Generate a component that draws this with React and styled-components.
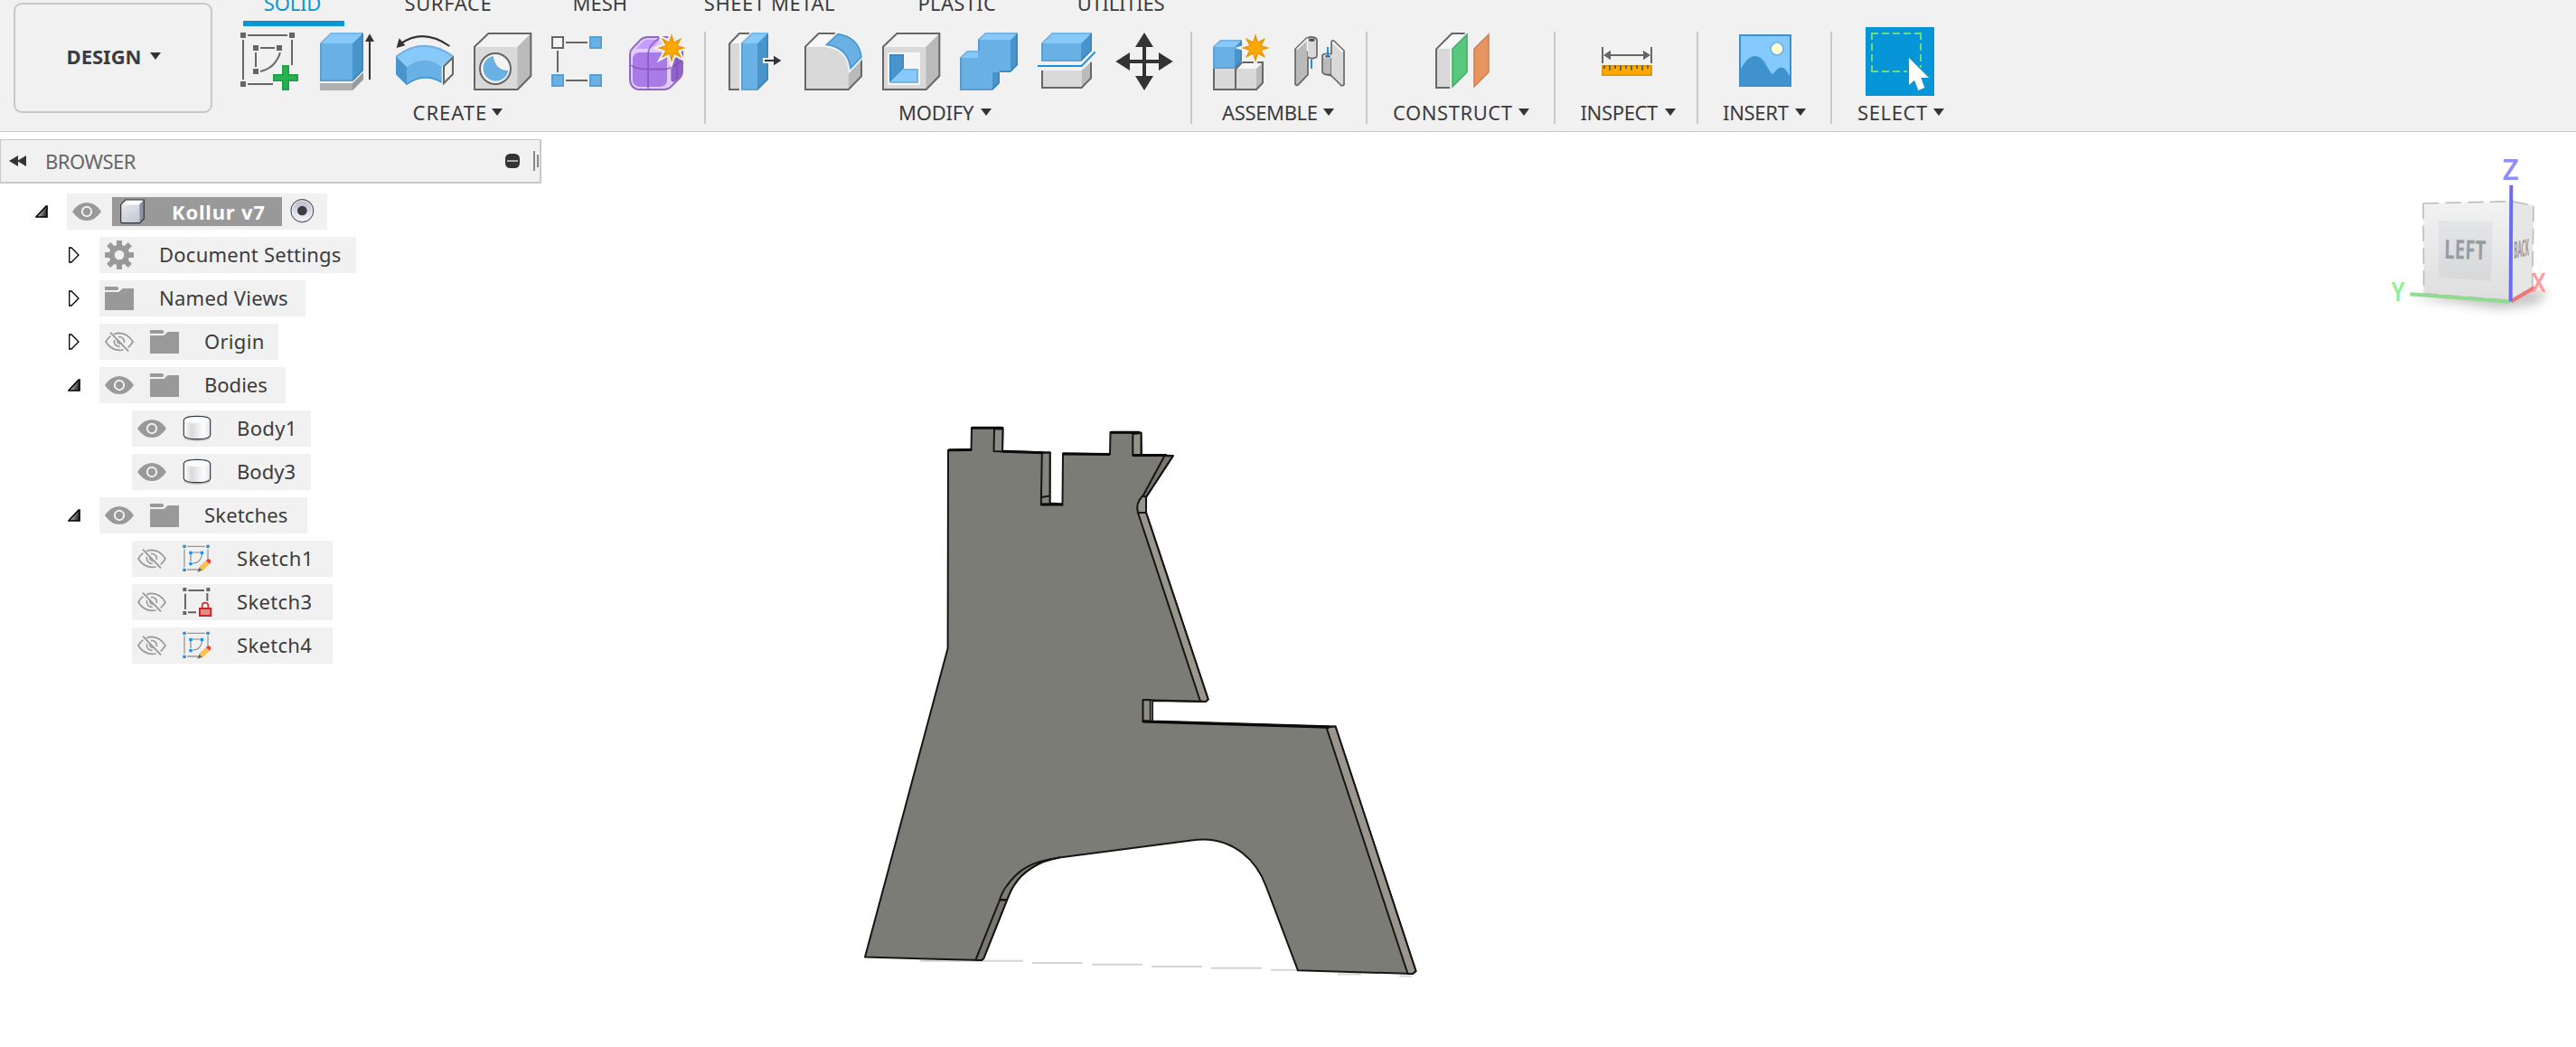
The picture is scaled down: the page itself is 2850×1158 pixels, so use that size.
import React from "react";
import styled, { createGlobalStyle, css } from "styled-components";

const INK = "#3c3c3c";
const LINE = "#c8c8c8";
const PANEL = "#f1f1f1";
const ACCENT = "#0696d7";

const GlobalStyle = createGlobalStyle`
  * { box-sizing: border-box; }
  body { margin: 0; background: #fff; }
`;

const Page = styled.div`
  width: 2850px;
  height: 1158px;
  overflow: hidden;
  display: flex;
  flex-direction: column;
  background: #fff;
  color: ${INK};
  font-family: "Noto Sans", "Open Sans", sans-serif;
  font-size: 22px;
  svg { display: block; flex: none; overflow: visible; }
`;

/* ---------- toolbar ---------- */

const Toolbar = styled.header`
  height: 146px;
  flex: none;
  display: flex;
  background: ${PANEL};
  border-bottom: 1px solid ${LINE};
  overflow: hidden;
`;

const WorkspaceButton = styled.button`
  width: 220px;
  height: 122px;
  margin: 3px 12px 0 15px;
  padding: 0 0 4px 2px;
  flex: none;
  display: flex;
  align-items: center;
  justify-content: center;
  gap: 10px;
  background: transparent;
  border: 2px solid ${LINE};
  border-radius: 9px;
  color: ${INK};
  font: inherit;
  font-weight: 700;
`;

const Ribbon = styled.div`
  display: flex;
  flex-direction: column;
`;

const Tabs = styled.nav`
  display: flex;
  height: 41px;
  margin-top: -12px;
  padding-left: 22px;
  flex: none;
`;

const Tab = styled.div`
  width: ${(p) => p.$width}px;
  margin-right: ${(p) => p.$after}px;
  padding-bottom: 5px;
  flex: none;
  text-align: center;
  line-height: 30px;
  white-space: nowrap;
  letter-spacing: ${(p) => p.$spacing}px;
  border-bottom: 6px solid transparent;
  ${(p) => p.$active && css`
    padding-right: 3px;
    color: ${ACCENT};
    border-bottom-color: ${ACCENT};
  `}
`;

const Groups = styled.div`
  display: flex;
`;

const Group = styled.section`
  width: ${(p) => p.$width}px;
  flex: none;
  display: flex;
  flex-direction: column;
  padding-top: 1px;
`;

const Divider = styled.div`
  width: 2px;
  height: 102px;
  margin-top: 6px;
  flex: none;
  background: ${LINE};
`;

const IconRow = styled.div`
  display: flex;
  height: 76px;
  padding-left: ${(p) => p.$inset}px;
`;

const GroupLabel = styled.div`
  display: flex;
  align-items: center;
  gap: 7px;
  height: 30px;
  margin-top: 3px;
  padding-left: ${(p) => p.$inset}px;
  line-height: 30px;
  white-space: nowrap;
`;

const Caption = styled.span`
  width: ${(p) => (p.$width ? p.$width + "px" : "auto")};
  letter-spacing: ${(p) => p.$spacing || 0}px;
`;

const Caret = ({ w = 12 }) => (
  <svg width={w} height="8" viewBox="0 0 12 8">
    <path d="M0 0H12L6 8Z" fill="#333" />
  </svg>
);

const Tool = ({ x, children }) => (
  <svg width="86" height="76" viewBox={`${x} 90 258 228`}>{children}</svg>
);

const star = (x, y, outer, inner) =>
  Array.from({ length: 16 }, (_, i) => {
    const r = i % 2 ? inner : outer;
    const a = (i * Math.PI) / 8;
    return `${(x + r * Math.sin(a)).toFixed(1)},${(y - r * Math.cos(a)).toFixed(1)}`;
  }).join(" ");

const Burst = ({ x, y }) => (
  <g>
    <polygon points={star(x, y, 48, 22)} fill={PANEL} stroke={PANEL} strokeWidth="12" />
    <polygon points={star(x, y, 48, 22)} fill="#e69800" />
    <polygon points={star(x, y, 32, 16)} fill="#ffa900" />
  </g>
);

const G = { stroke: "#666", strokeWidth: 6, fill: "none" };

const SketchIcon = () => (
  <Tool x={765}>
    <path d="M822 117H954M822 279H906M807 132V264M969 132V216M864 159H912M849 174V222M864 237Q914 226 930 174" {...G} />
    <path d="M798 108h18v18h-18zM960 108h18v18h-18zM798 270h18v18h-18zM840 150h18v18h-18zM918 150h18v18h-18zM840 228h18v18h-18z" fill="#666" />
    <path d="M939 219h18v30h30v18h-30v30h-18v-30h-30v-18h30z" fill="#26b450" stroke="#21a049" strokeWidth="6" />
  </Tool>
);

const ExtrudeIcon = () => (
  <Tool x={1023}>
    <path d="M1062 276H1170V300H1062Z" fill="#b0b0b0" />
    <path d="M1170 276L1206 240V264L1170 300Z" fill="#999" />
    <path d="M1062 144H1170V270H1062Z" fill="#69b0e5" />
    <path d="M1062 144L1098 108H1206L1170 144Z" fill="#87c9fb" />
    <path d="M1170 144L1206 108V234L1170 270Z" fill="#4894cd" />
    <path d="M1065 144V267H1169" stroke="#5c9fd2" strokeWidth="6" fill="none" />
    <path d="M1064 144L1099 111H1204" stroke="#76b3e2" strokeWidth="5" fill="none" />
    <path d="M1203 112V233L1170 267" stroke="#3d85bb" strokeWidth="5" fill="none" />
    <path d="M1227 264V130" stroke="#333" strokeWidth="6" />
    <path d="M1227 112L1242 138H1212Z" fill="#333" />
  </Tool>
);

const RevolveIcon = () => (
  <Tool x={1281}>
    <path d="M1314 186Q1405 114 1504 186L1466 220Q1407 176 1350 222Z" fill="#87c9fb" />
    <path d="M1316 187Q1405 118 1501 185" stroke="#70b0e0" strokeWidth="6" fill="none" />
    <path d="M1314 186L1350 222V282L1314 246Z" fill="#4894cd" />
    <path d="M1350 222Q1407 176 1466 220V276Q1407 240 1350 282Z" fill="#69b0e5" />
    <path d="M1316 246L1350 279Q1407 238 1465 272" stroke="#4b97d0" strokeWidth="5" fill="none" />
    <path d="M1473 220L1503 191V246L1473 276Z" fill={PANEL} stroke="#666" strokeWidth="6" />
    <path d="M1492 153Q1405 92 1330 145" stroke="#333" strokeWidth="6" fill="none" />
    <path d="M1316 159L1325 127L1345 151Z" fill="#333" />
  </Tool>
);

const Block = ({ x = 75, top = 156 }) => (
  <g>
    <path d={`M${x} ${top}L${x + 46} 111H${x + 187}L${x + 142} ${top}Z`} fill="#f3f3f3" />
    <path d={`M${x} ${top}H${x + 142}V297H${x}Z`} fill="#d9d9d9" />
    <path d={`M${x + 142} ${top}L${x + 187} 111V252L${x + 142} 297Z`} fill="#bababa" />
    <path d={`M${x} ${top - 1}L${x + 46} 111H${x + 187}V252L${x + 143} 297H${x}Z`} {...G} />
  </g>
);

const HoleIcon = () => (
  <Tool x={39}>
    <Block />
    <circle cx="144" cy="228" r="51" fill="#f3f3f3" stroke="#666" strokeWidth="6" />
    <path d="M137 186A42 42 0 1 0 187 234Q145 234 137 186Z" fill="#69b0e5" />
  </Tool>
);

const PatternIcon = () => (
  <Tool x={297}>
    <path d="M378 141H450M378 267H450M351 168V240" {...G} />
    <rect x="333" y="123" width="36" height="36" fill="#f5f5f5" stroke="#666" strokeWidth="6" />
    {[[459, 123], [333, 249], [459, 249]].map(([x, y]) => (
      <rect key={`${x}-${y}`} x={x} y={y} width="36" height="36" fill="#69b0e5" stroke="#5a9fd2" strokeWidth="6" />
    ))}
  </Tool>
);

const FormIcon = () => (
  <Tool x={555}>
    <path d="M591 180Q591 168 599 160L626 132Q636 123 650 123H735Q765 123 765 150V238Q765 250 757 258L728 287Q718 297 705 297H628Q591 297 591 260Z" fill="#e0cbfa" />
    <path d="M610 162L633 139Q640 131 652 131H690L668 160Q650 163 610 162Z" fill="#c79bff" />
    <rect x="600" y="174" width="114" height="114" rx="22" fill="#a97be6" />
    <path d="M727 220Q727 205 735 198L757 180Q766 180 766 200V238Q766 245 760 252L740 271Q727 275 727 262Z" fill="#9162cb" />
    <path d="M595 216Q610 230 650 230H700Q730 231 764 200M651 294V180Q651 150 690 125M747 180V268" stroke="#7d4cb0" strokeOpacity=".75" strokeWidth="5" fill="none" />
    <path d="M591 180Q591 168 599 160L626 132Q636 123 650 123H735Q765 123 765 150V238Q765 250 757 258L728 287Q718 297 705 297H628Q591 297 591 260Z" fill="none" stroke="#8f66c0" strokeWidth="6" />
    <path d="M695 100H790V190L762 196L716 205L690 180Z" fill="none" />
    <path d="M700 117H780V190L768 192V170L745 128Z" fill={PANEL} />
    <Burst x={729} y={159} />
  </Tool>
);

const PressPullIcon = () => (
  <Tool x={39}>
    <path d="M81 144L114 111H148L114 144Z" fill="#f7f7f7" />
    <path d="M81 144H114V297H81Z" fill="#d9d9d9" />
    <path d="M148 111H114L81 145V297H114" {...G} />
    <path d="M114 144L154 105V300H114Z" fill={PANEL} />
    <path d="M120 144H174V300H120Z" fill="#69b0e5" />
    <path d="M120 144L156 108H210L174 144Z" fill="#87c9fb" />
    <path d="M174 144L210 108V264L174 300Z" fill="#4894cd" />
    <path d="M123 144V297H174" stroke="#5a9fd2" strokeWidth="5" fill="none" />
    <path d="M122 144L157 111H206" stroke="#76b3e2" strokeWidth="5" fill="none" />
    <path d="M207 113V263L174 296" stroke="#3d85bb" strokeWidth="5" fill="none" />
    <path d="M192 192H222V180L258 201L222 222V210H192Z" fill={PANEL} />
    <path d="M198 201H230" stroke="#333" strokeWidth="6" />
    <path d="M228 185L253 201L228 217Z" fill="#333" />
  </Tool>
);

const FilletIcon = () => (
  <Tool x={297}>
    <path d="M333 155L377 111H434L400 154Z" fill="#f7f7f7" />
    <path d="M333 156H395Q476 160 476 245V297H333Z" fill="#d9d9d9" />
    <path d="M476 240L519 200V252L476 297Z" fill="#bababa" />
    <path d="M432 111H377L333 155V297H476L519 253V198" {...G} />
    <path d="M400 151L440 111Q512 120 521 190L482 230Q476 160 400 151Z" fill="#69b0e5" stroke="#f3f3f3" strokeWidth="12" />
    <path d="M404 148L441 113Q510 124 519 189L483 226Q474 158 404 148Z" fill="#69b0e5" stroke="#4b97d0" strokeWidth="5" />
  </Tool>
);

const ShellIcon = () => (
  <Tool x={555}>
    <Block x={591} />
    <path d="M606 174H714V282H606Z" fill="#f5f5f5" />
    <path d="M612 180H660V228L612 276Z" fill="#4894cd" />
    <path d="M660 228H708V276H612Z" fill="#87c9fb" />
    <path d="M615 268V183H657V226" stroke="#3d85bb" strokeWidth="5" fill="none" />
    <path d="M660 231H705V273H618" stroke="#70b0e0" strokeWidth="5" fill="none" />
  </Tool>
);

const CombineIcon = () => (
  <Tool x={813}>
    <path d="M846 192H906V132H1014V240H954V300H846Z" fill="#69b0e5" />
    <path d="M846 192L870 168H906V192ZM906 132L930 108H1038L1014 132Z" fill="#87c9fb" />
    <path d="M1014 132L1038 108V216L1014 240ZM954 240H978V276L954 300Z" fill="#4894cd" />
    <path d="M849 192V297H953M909 132V168M978 237H1014" stroke="#5195cb" strokeWidth="5" fill="none" />
    <path d="M848 192L871 171H906M908 132L931 111H1034" stroke="#70b0e0" strokeWidth="5" fill="none" />
    <path d="M1035 112V215L1013 237H978M975 240V275L954 296" stroke="#3d85bb" strokeWidth="5" fill="none" />
  </Tool>
);

const SplitIcon = () => (
  <Tool x={1071}>
    <path d="M1119 234H1250V291H1119Z" fill="#d9d9d9" />
    <path d="M1250 234L1281 206V258L1250 291Z" fill="#bababa" />
    <path d="M1119 234V291H1250L1281 259V206" {...G} />
    <path d="M1116 144H1248V204H1116Z" fill="#69b0e5" />
    <path d="M1116 144L1152 108H1284L1248 144Z" fill="#87c9fb" />
    <path d="M1248 144L1284 108V168L1248 204Z" fill="#4894cd" />
    <path d="M1119 144V201H1247" stroke="#5a9fd2" strokeWidth="5" fill="none" />
    <path d="M1118 144L1153 111H1280" stroke="#70b0e0" strokeWidth="5" fill="none" />
    <path d="M1281 112V167L1248 200" stroke="#3d85bb" strokeWidth="5" fill="none" />
    <path d="M1104 219H1250L1295 172" stroke="#1a8fe8" strokeWidth="6" fill="none" />
  </Tool>
);

const MoveIcon = () => (
  <Tool x={1329}>
    <path d="M1458 108L1488 156H1464V198H1506V174L1553 204L1506 234V210H1464V252H1488L1458 300L1428 252H1452V210H1410V234L1363 204L1410 174V198H1452V156H1428Z" fill="#333" />
  </Tool>
);

const ComponentIcon = () => (
  <Tool x={147}>
    <path d="M189 228H261V297H189Z" fill="#d9d9d9" />
    <path d="M261 228L282 207H351L330 228Z" fill="#f7f7f7" />
    <path d="M261 228H330V297H261Z" fill="#d9d9d9" />
    <path d="M330 228L351 207V275L330 297Z" fill="#bababa" />
    <path d="M189 226V297H330L351 275V207H282L261 230V297" {...G} />
    <path d="M186 156H258V228H186Z" fill="#69b0e5" />
    <path d="M186 156L210 132H282L258 156Z" fill="#87c9fb" />
    <path d="M258 156L282 132V204L258 228Z" fill="#4894cd" />
    <path d="M189 156V225H258" stroke="#5a9fd2" strokeWidth="5" fill="none" />
    <path d="M188 156L211 135H279" stroke="#70b0e0" strokeWidth="5" fill="none" />
    <path d="M279 136V203L258 225" stroke="#3d85bb" strokeWidth="5" fill="none" />
    <Burst x={327} y={159} />
  </Tool>
);

const JointIcon = () => (
  <Tool x={405}>
    <path d="M498 132V186Q501 193 516 194Q531 193 531 184V132Q527 123 514 123Q502 124 498 130Z" fill="#d9d9d9" stroke="#666" strokeWidth="5" />
    <path d="M459 163L497 126V170L501 192V248L470 280Q462 287 459 279Z" fill="#bababa" />
    <path d="M501 190V248L470 280Q462 287 459 279V163L497 126Q514 119 531 129" stroke="#666" strokeWidth="5" fill="none" />
    <path d="M464 164L499 130V170" stroke="#f3f3f3" strokeWidth="5" fill="none" />
    <ellipse cx="514" cy="133" rx="10" ry="5" fill="#4d4d4d" />
    <path d="M513 196V228" stroke="#1a8fe8" strokeWidth="6" />
    <path d="M549 184V239Q552 247 565 248H579V180Q573 178 566 178Q553 178 549 184Z" fill="#bababa" stroke="#666" strokeWidth="5" />
    <ellipse cx="567" cy="187" rx="14" ry="7" fill="#e6e6e6" />
    <ellipse cx="567" cy="187" rx="9" ry="4" fill="#4d4d4d" />
    <path d="M567 156V190" stroke="#1a8fe8" strokeWidth="6" />
    <path d="M579 138Q583 133 588 136L621 168V281Q616 287 610 282L579 251Z" fill="#d9d9d9" />
    <path d="M579 180V138Q583 133 588 136L621 168V281Q616 287 610 282L579 251L566 248" stroke="#666" strokeWidth="5" fill="none" />
    <path d="M583 139L617 172" stroke="#f5f5f5" strokeWidth="6" />
  </Tool>
);

const PlaneIcon = () => (
  <Tool x={879}>
    <path d="M927 162L979 111H1025L976 162Z" fill="#f7f7f7" />
    <path d="M927 162H973V291H927Z" fill="#d9d9d9" />
    <path d="M1022 111H979L927 163V291H972" {...G} />
    <path d="M981 162L1029 115V239L981 287Z" fill="#58c87f" stroke="#4aae6d" strokeWidth="5" />
    <path d="M1053 162L1101 115V239L1053 287Z" fill="#e69560" stroke="#cc8458" strokeWidth="5" />
  </Tool>
);

const MeasureIcon = () => (
  <Tool x={48}>
    <path d="M99 156V210M261 156V210M118 183H242" {...G} />
    <path d="M102 183L126 167V199ZM258 183L234 167V199Z" fill="#666" />
    <rect x="99" y="219" width="162" height="30" fill="#ffa900" stroke="#e69800" strokeWidth="6" />
    <path d="M105 216V228M123 216V234M141 216V228M159 216V234M177 216V228M195 216V234M213 216V228M231 216V234M249 216V228" {...G} />
  </Tool>
);

const InsertIcon = () => (
  <Tool x={510}>
    <rect x="555" y="117" width="168" height="168" fill="#84caff" />
    <circle cx="678" cy="162" r="21" fill="#ffffd0" stroke="#6fb4e8" strokeWidth="5" />
    <path d="M555 234Q580 186 604 186Q626 186 640 212Q655 240 664 247Q682 222 694 224Q708 225 721 255V285H555Z" fill="#3f93cd" />
    <rect x="555" y="117" width="168" height="168" fill="none" stroke="#3f8fc9" strokeWidth="6" />
  </Tool>
);

const SelectIcon = () => (
  <Tool x={957}>
    <rect x="972" y="90" width="228" height="228" fill={ACCENT} />
    <path d="M993 132V111H1014M1026 111H1050M1062 111H1086M1098 111H1122M1134 111H1155V132M1155 144V168M1155 180V204M993 144V168M993 180V204M993 216V237H1014M1026 237H1050M1062 237H1086M1098 237H1110M1155 216V224" stroke="#6bdc85" strokeWidth="6" fill="none" />
    <path d="M1116 192L1182 258H1156L1168 291L1147 300L1134 266L1116 282Z" fill="#fff" />
  </Tool>
);

const groups = [
  { name: "CREATE", width: 532, inset: 8, label: 209.5, text: 80.5, spacing: 1, icons: [SketchIcon, ExtrudeIcon, RevolveIcon, HoleIcon, PatternIcon, FormIcon] },
  { name: "MODIFY", width: 536, inset: 12, label: 213, text: 84, spacing: -0.2, icons: [PressPullIcon, FilletIcon, ShellIcon, CombineIcon, SplitIcon, MoveIcon] },
  { name: "ASSEMBLE", width: 192, inset: 10, label: 33, text: 105, spacing: -0.35, icons: [ComponentIcon, JointIcon] },
  { name: "CONSTRUCT", width: 206, inset: 60, label: 28, text: 132, spacing: 0.55, icons: [PlaneIcon] },
  { name: "INSPECT", width: 156, inset: 35, label: 27.5, text: 86.5, spacing: -0.35, icons: [MeasureIcon] },
  { name: "INSERT", width: 146, inset: 31, label: 27, text: 73, spacing: -0.3, icons: [InsertIcon] },
  { name: "SELECT", width: 150, inset: 32, label: 28, text: 76.5, spacing: 0.6, icons: [SelectIcon] },
];

const tabs = [
  ["SOLID", 112, 66.5, -0.15, true],
  ["SURFACE", 96, 90, 0.6],
  ["MESH", 60, 85, 0],
  ["SHEET METAL", 146, 91, 0.55],
  ["PLASTIC", 86, 89.5, 0.3],
  ["UTILITIES", 98, 0, -0.25],
];

/* ---------- browser panel ---------- */

const Workspace = styled.main`
  display: flex;
  flex: 1;
  align-items: flex-start;
`;

const Browser = styled.aside`
  width: 600px;
  flex: none;
  padding-top: 8px;
`;

const BrowserHeader = styled.div`
  width: 599px;
  height: 49px;
  display: flex;
  align-items: center;
  padding: 0 1px 0 9px;
  background: ${PANEL};
  border: 1px solid ${LINE};
  border-right-width: 2px;
  border-bottom-width: 2px;
  color: #666;
`;

const BrowserTitle = styled.span`
  flex: 1;
  padding: 0 0 1px 20px;
  letter-spacing: -0.5px;
`;

const Tree = styled.ul`
  list-style: none;
  margin: 11px 0 0;
  padding: 0;
  display: flex;
  flex-direction: column;
  gap: 8px;
`;

const Row = styled.li`
  display: flex;
  align-items: center;
  height: 40px;
  padding-left: ${(p) => 38 + p.$depth * 36}px;
`;

const Toggle = styled.span`
  width: 36px;
  padding-left: ${(p) => (p.$open ? 1 : 2)}px;
  flex: none;
`;

const RowBody = styled.div`
  display: flex;
  align-items: center;
  width: ${(p) => p.$width}px;
  height: 40px;
  padding-left: 6px;
  background: ${PANEL};
  white-space: nowrap;
`;

const Slot = styled.span`
  width: 32px;
  height: 32px;
  margin-right: 18px;
  flex: none;
  display: flex;
  align-items: center;
  justify-content: center;
`;

const RowText = styled.span`
  padding: 0 0 2px 10px;
  line-height: 38px;
  letter-spacing: ${(p) => p.$spacing}px;
`;

const Selected = styled.div`
  display: flex;
  align-items: center;
  width: 188px;
  height: 32px;
  margin: 0 9px 0 -6px;
  padding-left: 9px;
  background: #999;
  color: #fff;
  font-weight: 700;
  line-height: 30px;
  letter-spacing: 0.8px;
`;

const SelectedText = styled.span`
  padding: 0 0 1px 30px;
`;

const OpenArrow = () => (
  <svg width="14" height="14" viewBox="0 0 14 14">
    <defs>
      <linearGradient id="arrow" x1="0" y1="0" x2="1" y2="0.3">
        <stop offset="0.2" stopColor="#ddd" />
        <stop offset="1" stopColor="#333" />
      </linearGradient>
    </defs>
    <path d="M1 12.7L12 1H13V13H1Z" fill="url(#arrow)" stroke="#000" strokeWidth="1.6" />
  </svg>
);

const ClosedArrow = () => (
  <svg width="12" height="18" viewBox="0 0 12 18">
    <path d="M.7 1H3L11 9L3 17H.7Z" fill="#fff" stroke="#000" strokeWidth="1.3" />
  </svg>
);

const Eye = () => (
  <svg width="32" height="20" viewBox="0 0 96 60">
    <path d="M0 30Q20 0 48 0T96 30Q76 60 48 60T0 30Z" fill="#999" />
    <circle cx="48" cy="30" r="15.5" fill="#999" stroke="#f1f1f1" strokeWidth="6" />
  </svg>
);

const EyeOff = () => (
  <svg width="32" height="22" viewBox="0 0 96 66">
    <path d="M30 8Q39 4 48 4Q76 5 93 33Q85 46 77 52M62 59Q56 61 48 61Q20 60 3 33Q10 21 19 14M45 17A16 16 0 0 1 64 36M32 27A17 17 0 0 0 50 49M42 28Q40 38 52 40" fill="none" stroke="#999" strokeWidth="5" />
    <path d="M18 2L78 64" stroke="#999" strokeWidth="5.5" />
  </svg>
);

const Gear = () => (
  <svg width="32" height="32" viewBox="0 0 96 96">
    <g fill="#999">
      <rect x="39" y="0" width="18" height="96" />
      <rect x="0" y="39" width="96" height="18" />
      <rect x="39" y="-2" width="18" height="100" transform="rotate(45 48 48)" />
      <rect x="39" y="-2" width="18" height="100" transform="rotate(-45 48 48)" />
      <circle cx="48" cy="48" r="34" />
    </g>
    <circle cx="48" cy="48" r="16" fill="#f1f1f1" />
  </svg>
);

const Folder = () => (
  <svg width="32" height="26" viewBox="0 0 96 78">
    <path d="M0 0H39Q46 1 46 7L42 12H0ZM0 18H46L59 6H96V78H0Z" fill="#999" />
  </svg>
);

const Cylinder = () => (
  <svg width="32" height="30" viewBox="0 0 96 90">
    <defs>
      <linearGradient id="cyl">
        <stop offset="0" stopColor="#fff" />
        <stop offset="0.3" stopColor="#d8dadd" />
        <stop offset="0.75" stopColor="#fdfdfd" />
        <stop offset="1" stopColor="#e4e4e6" />
      </linearGradient>
    </defs>
    <ellipse cx="48" cy="76" rx="43" ry="10" fill="#bbb" />
    <path d="M4 16Q8 4 48 4T92 16V68Q88 80 48 80T4 68Z" fill="url(#cyl)" stroke="#333943" strokeWidth="3.5" />
    <path d="M7 17Q10 7 48 7T89 17Q82 27 48 27T7 17Z" fill="#fbfbfb" />
  </svg>
);

const SketchItem = () => (
  <svg width="32" height="32" viewBox="0 0 96 96">
    <path d="M15 7H75M6 16V76M15 84H54M84 16V60" stroke="#999" strokeWidth="4" fill="none" />
    <path d="M32 27H58M27 33V58M34 63Q62 62 64 33" stroke="#888" strokeWidth="3.5" fill="none" />
    <path d="M1 2h10v10H1zM79 2h10v10H79zM1 80h10v10H1zM22 23h10v10H22zM59 23h10v10H59zM22 60h10v10H22z" fill="#1a8fe8" />
    <path d="M49 92L56 76L66 86Z" fill="#666" />
    <path d="M56 76L77 55L88 65L67 86Z" fill="#ffc24d" stroke="#f0b03a" strokeWidth="2" />
    <path d="M78 54Q84 46 91 50Q97 57 89 65Z" fill="#f33" />
  </svg>
);

const LockedSketch = () => (
  <svg width="32" height="32" viewBox="0 0 96 96">
    <path d="M19 9H72M9 20V72M82 18V44M18 82H45" stroke="#666" strokeWidth="6" fill="none" />
    <path d="M1 0h12v12H1zM79 0h12v12H79zM1 78h12v12H1z" fill="#666" />
    <path d="M65 68V58Q66 50 75 50T85 58V68" fill="none" stroke="#d03030" strokeWidth="5" />
    <rect x="57" y="69" width="37" height="24" fill="#e08a8a" stroke="#c82828" strokeWidth="6" />
  </svg>
);

const RootCube = () => (
  <svg width="27" height="28" viewBox="0 0 81 84">
    <defs>
      <linearGradient id="cubeFront" x1="0" y1="0" x2="0.6" y2="1">
        <stop offset="0" stopColor="#eceef4" />
        <stop offset="1" stopColor="#c3c8d4" />
      </linearGradient>
    </defs>
    <path d="M2 19L18 3H79V66L65 80H7Q2 80 2 74Z" fill="url(#cubeFront)" />
    <path d="M3 19L18 4H77L64 19Z" fill="#fff" />
    <path d="M64 19L78 4V66L65 79Z" fill="#8a90a0" />
    <path d="M2 19L18 3H79V66L65 80H7Q2 80 2 74Z" fill="none" stroke="#30333b" strokeWidth="3.5" />
  </svg>
);

const Radio = () => (
  <svg width="27" height="28" viewBox="0 0 81 84">
    <defs>
      <linearGradient id="radio" x1="0" y1="0" x2="0" y2="1">
        <stop offset="0" stopColor="#b4b9ca" />
        <stop offset="1" stopColor="#f4f6fb" />
      </linearGradient>
    </defs>
    <circle cx="40" cy="42" r="38" fill="#aaa" opacity=".5" />
    <circle cx="40" cy="39" r="37.5" fill="url(#radio)" stroke="#444" strokeWidth="3" />
    <circle cx="40" cy="39" r="33" fill="none" stroke="#fff" strokeOpacity=".6" strokeWidth="3" />
    <circle cx="40" cy="39" r="16" fill="#3c3c40" />
  </svg>
);

const slots = { eye: Eye, off: EyeOff, gear: Gear, folder: Folder, body: Cylinder, sketch: SketchItem, locked: LockedSketch };

const rows = [
  { text: "Document Settings", depth: 1, width: 284, toggle: "closed", icons: ["gear"], spacing: 0.24 },
  { text: "Named Views", depth: 1, width: 228, toggle: "closed", icons: ["folder"], spacing: 0.25 },
  { text: "Origin", depth: 1, width: 198, toggle: "closed", icons: ["off", "folder"], spacing: 0.3 },
  { text: "Bodies", depth: 1, width: 206, toggle: "open", icons: ["eye", "folder"], spacing: 0 },
  { text: "Body1", depth: 2, width: 198, icons: ["eye", "body"], spacing: 0.35 },
  { text: "Body3", depth: 2, width: 198, icons: ["eye", "body"], spacing: 0.05 },
  { text: "Sketches", depth: 1, width: 230, toggle: "open", icons: ["eye", "folder"], spacing: 0.15 },
  { text: "Sketch1", depth: 2, width: 222, icons: ["off", "sketch"], spacing: 0.6 },
  { text: "Sketch3", depth: 2, width: 222, icons: ["off", "locked"], spacing: 0.35 },
  { text: "Sketch4", depth: 2, width: 222, icons: ["off", "sketch"], spacing: 0.3 },
];

/* ---------- viewport ---------- */

const Viewport = styled.section`
  flex: 1;
  height: 100%;
  display: flex;
  align-items: flex-start;
  justify-content: space-between;
  padding: 14px 0 0 340px;
`;

const ModelFrame = styled.div`
  padding-top: 300px;
`;

const Model = () => (
  <svg width="640" height="640" viewBox="940 460 640 640">
    <g stroke="#d4d4d4" strokeWidth="2">
      <path d="M1018 1062.7H1131.7M1142 1065H1197.7M1208 1066.8H1264M1274 1069H1329.7M1340 1070.8H1396M1406 1072.8H1450M1480 1077.5H1506M1548 1079.5H1562" />
    </g>
    <g stroke="#151515" strokeWidth="2" strokeLinejoin="round">
      <path d="M1049 498L1074.5 497.5L1075 473L1109.5 473L1109 499L1161.7 500.5L1161.5 556.5L1175.5 557.5L1176 501.5L1228 502.3L1228.5 478L1262.5 478.5L1263 503.5L1298 504L1268 550V567L1336.7 773.5L1334 776L1275 775V797.5L1477.5 803.5L1566.5 1074L1563 1077L1436 1073.3L1401 981C1390 950 1364 929 1332 928.5Q1326 928.4 1318 929.5L1172 948.5C1148 952 1130 966 1122 979Q1118 985 1114.3 995L1088.3 1060L1086 1062L957 1058.6L1048.6 717Z" fill="#7b7c75" />
      <path d="M1100 474.5H1109.5L1109 499.5L1099.5 499Z" fill="#8d8b84" />
      <path d="M1253.3 480L1262.5 479L1262.5 503.5L1253.3 503Z" fill="#979389" />
      <path d="M1152.8 501L1161.7 500.5L1161.5 557.5L1151.8 558Z" fill="#85847c" />
      <path d="M1152 550L1161 548.5" fill="none" />
      <path d="M1288.5 504L1297.5 504.5L1268 549.5H1264Z" fill="#7a766f" />
      <path d="M1264 548.5L1268 549.5V567H1259Q1256 557 1264 548.5Z" fill="#96938b" />
      <path d="M1259 567H1268L1336.7 773.5L1334 776L1328 775.6Z" fill="#9b968d" />
      <path d="M1264.5 774H1272.8V797.5H1264.5Z" fill="#8f8d85" />
      <path d="M1272.8 774.5H1275V797.5H1272.8Z" fill="#777870" strokeWidth="0.8" />
      <path d="M1467.5 804.5L1477.5 803.5L1566.5 1074L1563 1077L1557.5 1077Z" fill="#9b968d" />
      <path d="M1172 948.5C1148 952 1130 966 1122 979Q1118 985 1114.3 995H1106Q1109 986 1113 981C1126 962 1140 953 1172 948.5Z" fill="#7f7d76" />
      <path d="M1106 995.5H1114L1088.3 1060L1086 1062L1079.3 1061.8Z" fill="#7a766f" />
      <path d="M1264.5 774L1334 776" fill="none" />
    </g>
    <g stroke="#0a0a0a" strokeWidth="3" strokeLinecap="round" fill="none">
      <path d="M1050 497.7L1074 497.5M1076 473.2H1108M1110 499.3L1153 500.7M1152.5 558H1175M1177 502L1227 502.5M1230 478.3H1260M1254 503.5H1290M1265 798L1470 804.2" />
    </g>
  </svg>
);

const CubeFrame = styled.div`
  flex: none;
`;

const ViewCube = () => (
  <svg width="230" height="200" viewBox="0 0 690 600" fontFamily="'Noto Sans', sans-serif">
    <defs>
      <linearGradient id="cubeLeft" x1="0" y1="0" x2="0" y2="1">
        <stop offset="0" stopColor="#f2f2f2" />
        <stop offset="1" stopColor="#dedede" />
      </linearGradient>
      <linearGradient id="cubeLabel" x1="0" y1="0" x2="0" y2="1">
        <stop offset="0" stopColor="#e3e5e8" />
        <stop offset="1" stopColor="#d6d8da" />
      </linearGradient>
      <filter id="soft" x="-30%" y="-60%" width="160%" height="220%">
        <feGaussianBlur stdDeviation="18" />
      </filter>
    </defs>
    <path d="M140 505L480 470L600 490L555 530L440 545Z" fill="#777" opacity=".42" filter="url(#soft)" />
    <path d="M183 195L475 188L470 520L185 494Z" fill="url(#cubeLeft)" />
    <path d="M475 188L549 202L545 474L470 520Z" fill="#e6e6e6" />
    <path d="M234 252L414 255L408 452L235 440Z" fill="url(#cubeLabel)" />
    <path d="M183 195L475 188L549 202L545 474M183 195L185 494L470 516" fill="none" stroke="#bdbdbd" strokeWidth="5" strokeDasharray="52 22" />
    <text x="0" y="0" transform="translate(252 378) rotate(1.5)" fontSize="88" fontWeight="700" fill="#999da1" textLength="138" lengthAdjust="spacingAndGlyphs">LEFT</text>
    <text x="0" y="0" transform="translate(484 378) skewY(-12)" fontSize="78" fontWeight="700" fill="#999ca0" textLength="50" lengthAdjust="spacingAndGlyphs">BACK</text>
    <path d="M139 496L472 521" stroke="#8edb8e" strokeWidth="12" />
    <path d="M474 520L552 474" stroke="#ee7777" strokeWidth="13" />
    <path d="M475 134L473 520" stroke="#6c6cf2" strokeWidth="12" />
    <text x="446" y="118" fontSize="96" fontWeight="600" fill="#8f8ffb" textLength="54" lengthAdjust="spacingAndGlyphs">Z</text>
    <text x="77" y="520" fontSize="88" fontWeight="600" fill="#8ff08f" textLength="44" lengthAdjust="spacingAndGlyphs">Y</text>
    <text x="543" y="489" fontSize="86" fontWeight="600" fill="#ff9a9a" textLength="47" lengthAdjust="spacingAndGlyphs">X</text>
  </svg>
);

export default function App() {
  return (
    <Page>
      <GlobalStyle />
      <Toolbar>
        <WorkspaceButton>
          <Caption $spacing={0}>DESIGN</Caption>
          <Caret />
        </WorkspaceButton>
        <Ribbon>
          <Tabs>
            {tabs.map(([name, width, after, spacing, active]) => (
              <Tab key={name} $width={width} $after={after} $spacing={spacing} $active={active}>{name}</Tab>
            ))}
          </Tabs>
          <Groups>
            {groups.map((g, i) => (
              <React.Fragment key={g.name}>
                {i > 0 && <Divider />}
                <Group $width={g.width}>
                  <IconRow $inset={g.inset}>
                    {g.icons.map((Icon, k) => <Icon key={k} />)}
                  </IconRow>
                  <GroupLabel $inset={g.label}>
                    <Caption $width={g.text} $spacing={g.spacing}>{g.name}</Caption>
                    <Caret />
                  </GroupLabel>
                </Group>
              </React.Fragment>
            ))}
          </Groups>
        </Ribbon>
      </Toolbar>
      <Workspace>
        <Browser>
          <BrowserHeader>
            <svg width="20" height="12" viewBox="0 0 20 12">
              <path d="M0 6L10 0V12ZM9 6L19 0V12Z" fill="#333" />
            </svg>
            <BrowserTitle>BROWSER</BrowserTitle>
            <svg width="37" height="22" viewBox="0 0 37 22">
              <rect x="0" y="3" width="16" height="16" rx="5.5" fill="#333" />
              <path d="M2 11H14" stroke="#aaa" strokeWidth="2" />
              <path d="M32 0V22M36 4V18" stroke="#888" strokeWidth="2" />
            </svg>
          </BrowserHeader>
          <Tree>
            <Row $depth={0}>
              <Toggle $open><OpenArrow /></Toggle>
              <RowBody $width={288}>
                <Slot><Eye /></Slot>
                <Selected>
                  <RootCube />
                  <SelectedText>Kollur v7</SelectedText>
                </Selected>
                <Radio />
              </RowBody>
            </Row>
            {rows.map((r) => (
              <Row key={r.text} $depth={r.depth}>
                <Toggle $open={r.toggle === "open"}>
                  {r.toggle === "open" && <OpenArrow />}
                  {r.toggle === "closed" && <ClosedArrow />}
                </Toggle>
                <RowBody $width={r.width}>
                  {r.icons.map((name) => {
                    const Icon = slots[name];
                    return <Slot key={name}><Icon /></Slot>;
                  })}
                  <RowText $spacing={r.spacing}>{r.text}</RowText>
                </RowBody>
              </Row>
            ))}
          </Tree>
        </Browser>
        <Viewport>
          <ModelFrame><Model /></ModelFrame>
          <CubeFrame><ViewCube /></CubeFrame>
        </Viewport>
      </Workspace>
    </Page>
  );
}
